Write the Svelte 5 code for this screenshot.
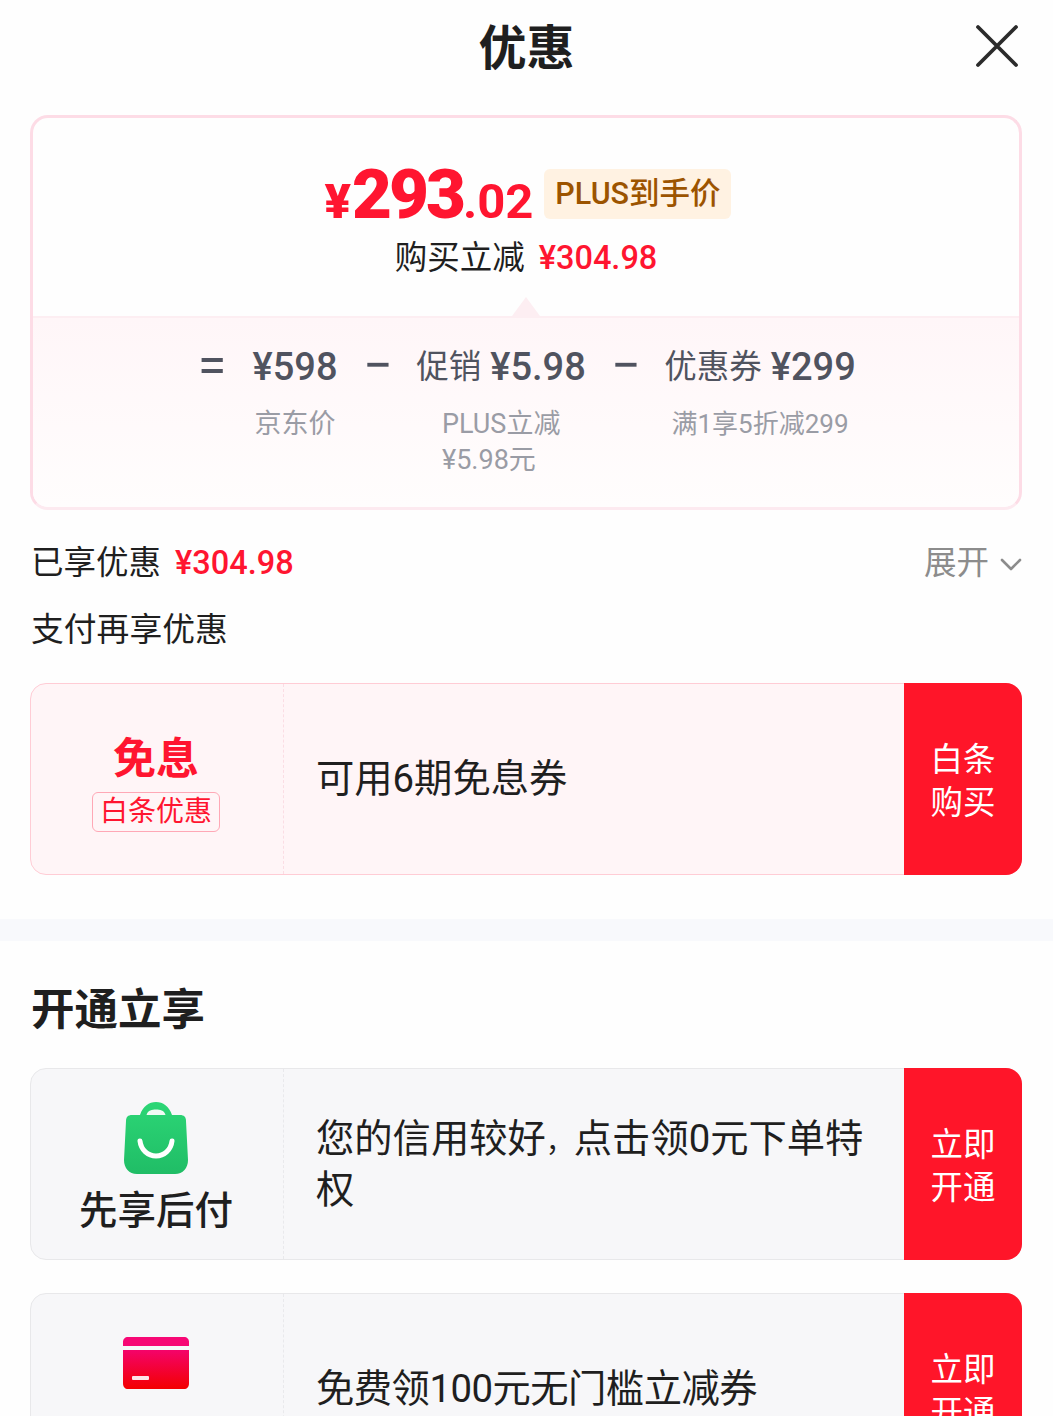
<script>
  const cards = [
    { pre: '您的信用较好', comma: '，', text: '点击领0元下单特权', name: '先享后付', icon: 'bag', btn: ['立即', '开通'], tight: false },
    { pre: '', comma: '', text: '免费领100元无门槛立减券', name: '', icon: 'card', btn: ['立即', '开通'], tight: true }
  ];
</script>

<div class="page">
  <header class="head">
    <h1>优惠</h1>
    <svg class="close" width="44" height="44" viewBox="0 0 44 44"><path d="M3 3 L41 41 M41 3 L3 41" stroke="#2b2b2b" stroke-width="3.8" stroke-linecap="round" fill="none"/></svg>
  </header>

  <section class="summary">
    <div class="top">
      <div class="price-row">
        <span class="price"><span class="yen">¥</span><span class="int">293</span><span class="dec">.02</span></span>
        <span class="badge">PLUS到手价</span>
      </div>
      <div class="save">购买立减<b>¥304.98</b></div>
      <i class="tri"></i>
    </div>
    <div class="bottom">
      <div class="calc">
        <span class="op">=</span>
        <div class="term t1"><div class="val"><span class="num">¥598</span></div><div class="sub">京东价</div></div>
        <span class="op">−</span>
        <div class="term t2"><div class="val">促销<span class="num gap">¥5.98</span></div><div class="sub left">PLUS立减<br/>¥5.98元</div></div>
        <span class="op">−</span>
        <div class="term t3"><div class="val">优惠券<span class="num gap">¥299</span></div><div class="sub small">满1享5折减299</div></div>
      </div>
    </div>
  </section>

  <div class="enjoyed">
    <span>已享优惠<b>¥304.98</b></span>
    <span class="more">展开<svg width="22" height="14" viewBox="0 0 22 14"><path d="M2 2 L11 11 L20 2" fill="none" stroke="#8c8c8c" stroke-width="2.6" stroke-linecap="round" stroke-linejoin="round"/></svg></span>
  </div>
  <div class="again">支付再享优惠</div>

  <article class="coupon pink">
    <div class="left-col">
      <div class="free">免息</div>
      <div class="tag">白条优惠</div>
    </div>
    <div class="desc">可用6期免息券</div>
    <div class="btn">白条<br/>购买</div>
  </article>

  <div class="band"></div>

  <h2>开通立享</h2>

  <div class="list">
    {#each cards as c}
      <article class="coupon">
        <div class="left-col">
          {#if c.icon === 'bag'}
            <svg class="ico" width="66" height="72" viewBox="0 0 66 72">
              <defs><linearGradient id="g1" x1="0" y1="0" x2="0" y2="1"><stop offset="0" stop-color="#2cd676"/><stop offset="1" stop-color="#20bd66"/></linearGradient></defs>
              <path fill="url(#g1)" d="M17 13 C20 4 26 0 33 0 C40 0 46 4 49 13 L57 13 C61 13 63 15 63 19 L65 58 C65 66 60 72 52 72 L14 72 C6 72 1 66 1 58 L3 19 C3 15 5 13 9 13 Z"/>
              <path d="M23.500 13 C25 8 29 7.500 33 7.500 C37 7.500 41 8 42.500 13 Z" fill="#f0faf4"/>
              <path d="M17 39 C18 48 25 54 33 54 C41 54 48 48 49 39" fill="none" stroke="#fff" stroke-width="5" stroke-linecap="round"/>
            </svg>
          {:else}
            <svg class="ico card-ico" width="66" height="52" viewBox="0 0 66 52">
              <defs><linearGradient id="g2" x1="0" y1="0" x2="0" y2="1"><stop offset="0" stop-color="#f4036a"/><stop offset="1" stop-color="#f30000"/></linearGradient></defs>
              <path fill="#f70775" d="M0 9 V5 C0 2 2 0 5 0 H61 C64 0 66 2 66 5 V9 Z"/>
              <path fill="url(#g2)" d="M0 13 H66 V46 C66 50 64 52 61 52 H5 C2 52 0 50 0 46 Z"/>
              <rect x="9" y="39" width="17" height="4" rx="1" fill="#fff" opacity="0.9"/>
            </svg>
          {/if}
          {#if c.name}<div class="name">{c.name}</div>{/if}
        </div>
        <div class="desc" class:tight={c.tight}>{c.pre}{#if c.comma}<span class="comma">{c.comma}</span>{/if}{c.text}</div>
        <div class="btn">{c.btn[0]}<br/>{c.btn[1]}</div>
      </article>
    {/each}
  </div>
</div>

<style>
  :global(body) { margin: 0; background: #fefefe; }
  .page {
    width: 1053px; height: 1416px; overflow: hidden; background: #fefefe; color: #1f1f1f;
    font-family: Roboto, "Noto Sans CJK SC", sans-serif;
  }
  .head { height: 94px; padding-top: 4px; box-sizing: border-box; display: flex; align-items: center; justify-content: center; position: relative; }
  h1 { margin: 0; font-size: 48px; font-weight: 600; line-height: 60px; }
  .close { position: absolute; left: 975px; top: 24px; }

  .summary { margin: 21px 31px 0 30px; height: 395px; box-sizing: border-box; border: 3px solid #fddce6; border-bottom-color: #fdeaf0; border-radius: 18px; overflow: hidden; display: flex; flex-direction: column; }
  .top { height: 198px; display: flex; flex-direction: column; align-items: center; position: relative; box-sizing: border-box; padding-top: 51px; }
  .price-row { display: flex; align-items: flex-start; gap: 11px; height: 50px; margin-left: 3px; }
  .price { color: #ff1530; font-weight: 900; display: flex; align-items: baseline; line-height: 60px; margin-top: -4px; height: 54px; }
  .yen { font-size: 49px; margin-right: 1px; }
  .int { font-size: 69px; letter-spacing: -3px; }
  .dec { font-size: 49px; font-weight: 700; }
  .badge { height: 50px; line-height: 50px; padding: 0 10px 0 11px; background: #fff2e2; color: #9c5400; font-size: 30.500px; font-weight: 500; border-radius: 6px; white-space: nowrap; }
  .save { margin-top: 18px; font-size: 32.500px; line-height: 42px; white-space: nowrap; }
  .save b { margin-left: 14px; color: #ff1530; font-weight: 500; font-size: 32.500px; }
  .tri { position: absolute; left: 479px; bottom: 0; width: 0; height: 0; border-left: 14px solid transparent; border-right: 14px solid transparent; border-bottom: 19px solid #fdeef2; }
  .bottom { flex: 1; border-top: 2px solid #fdeef2; background: linear-gradient(#fff6f8, #fffdfd); }
  .calc { display: flex; align-items: flex-start; gap: 28px; padding: 26px 0 0 167px; }
  .op { font-size: 52px; line-height: 44px; font-weight: 400; color: #50535f; width: 24px; display: flex; justify-content: center; flex: none; }
  .term { display: flex; flex-direction: column; align-items: center; flex: none; }
  .t1 { width: 86px; }
  .t2 { width: 170px; margin-left: -2px; }
  .t3 { width: 192px; margin-left: -2px; }
  .val { font-size: 32.500px; line-height: 46px; height: 46px; color: #50535f; white-space: nowrap; display: flex; align-items: center; }
  .num { font-size: 38px; font-weight: 500; }
  .num.gap { margin-left: 9px; }
  .sub { margin-top: 16px; font-size: 27px; line-height: 36px; color: #9a9ca5; white-space: nowrap; }
  .sub.left { width: 118px; text-align: left; }
  .sub.small { font-size: 26px; }

  .enjoyed { margin: 27px 31px 0 31px; display: flex; justify-content: space-between; align-items: center; height: 44px; font-size: 32.500px; }
  .enjoyed b { margin-left: 14px; color: #ff1530; font-weight: 500; }
  .more { color: #8c8c8c; display: flex; align-items: center; gap: 11px; }
  .more svg { margin-top: 12px; }
  .again { margin: 27px 31px 0; font-size: 32.800px; line-height: 44px; }

  .coupon { margin: 0 31px 0 30px; height: 192px; box-sizing: border-box; border: 1px solid #e8e8ea; border-radius: 16px; background: #f7f7f9; display: flex; }
  .coupon.pink { margin-top: 31px; background: #fff5f7; border-color: #ffccd5; }
  .left-col { width: 253px; flex: none; box-sizing: border-box; border-right: 1px dashed #e9e9ec; padding-right: 2px; display: flex; flex-direction: column; align-items: center; padding-top: 33px; }
  .pink .left-col { border-right-color: #fbdde4; padding-top: 45px; }
  .free { color: #ff1530; font-size: 43px; font-weight: 600; line-height: 60px; }
  .tag { margin-top: 3px; height: 40px; width: 128px; flex: none; box-sizing: border-box; border: 1px solid #ffa8b6; border-radius: 6px; color: #ff1530; font-size: 28px; line-height: 38px; text-align: center; white-space: nowrap; }
  .desc { flex: 1; min-width: 0; padding: 0 20px 1px 32px; align-self: center; font-size: 38.300px; line-height: 51px; }
  .desc.tight { letter-spacing: -0.5px; }
  .comma { font-size: 28px; line-height: 0; }
  .btn { width: 118px; margin: -1px -1px -1px 0; padding-top: 5px; box-sizing: border-box; flex: none; background: #ff1529; border-radius: 0 16px 16px 0; color: #fff; font-size: 32.500px; line-height: 43px; display: flex; align-items: center; justify-content: center; text-align: center; }
  .ico { display: block; flex: none; }
  .card-ico { margin-top: 10px; }
  .name { margin-top: 10px; font-size: 38.500px; line-height: 54px; font-weight: 500; }

  .band { height: 22px; margin-top: 44px; background: #f8f9fc; }
  h2 { margin: 40px 31px 0; font-size: 43.500px; line-height: 60px; font-weight: 600; }
  .list { margin-top: 27px; display: flex; flex-direction: column; gap: 33px; }
</style>
